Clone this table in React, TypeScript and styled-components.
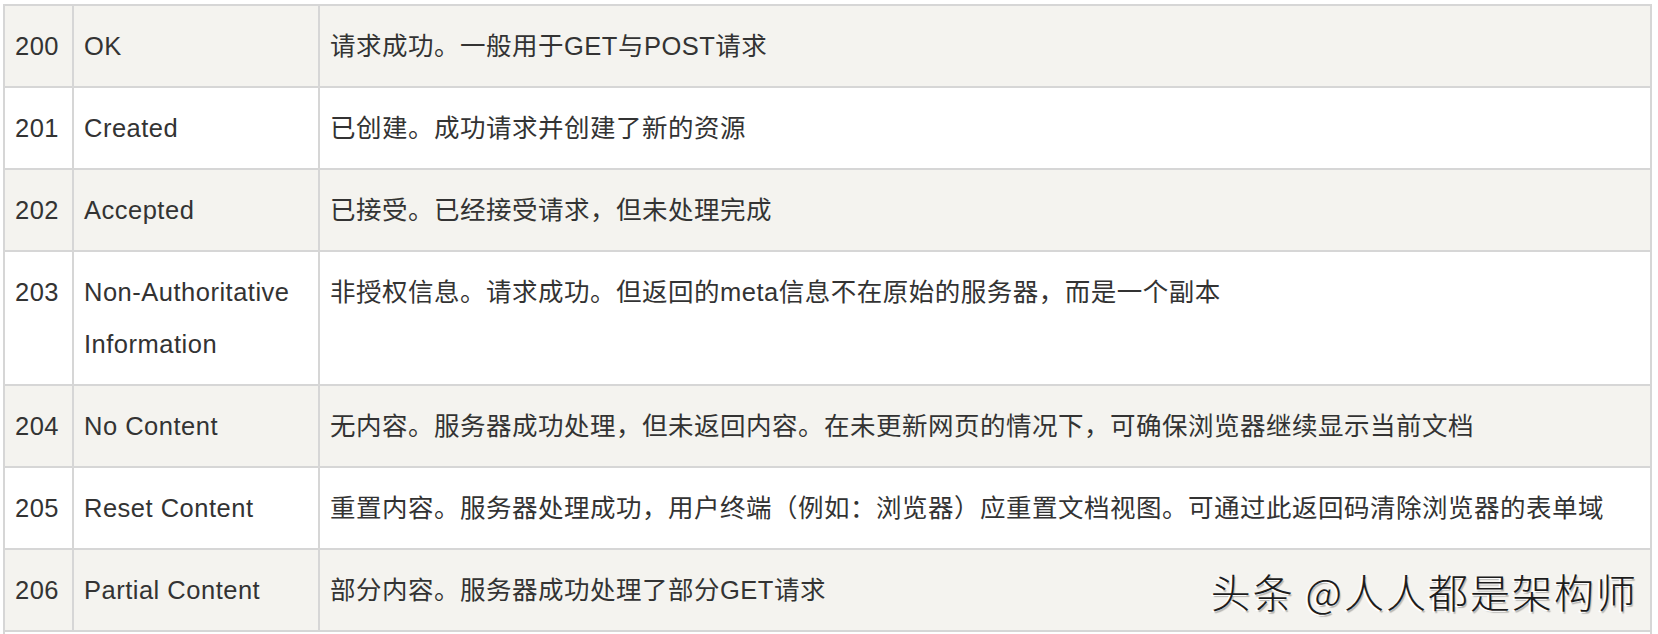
import styled, { createGlobalStyle } from "styled-components";

type StatusRow = {
  code: string;
  name: string;
  desc: string;
};

const rows: StatusRow[] = [
  { code: "200", name: "OK", desc: "请求成功。一般用于GET与POST请求" },
  { code: "201", name: "Created", desc: "已创建。成功请求并创建了新的资源" },
  { code: "202", name: "Accepted", desc: "已接受。已经接受请求，但未处理完成" },
  {
    code: "203",
    name: "Non-Authoritative Information",
    desc: "非授权信息。请求成功。但返回的meta信息不在原始的服务器，而是一个副本",
  },
  {
    code: "204",
    name: "No Content",
    desc: "无内容。服务器成功处理，但未返回内容。在未更新网页的情况下，可确保浏览器继续显示当前文档",
  },
  {
    code: "205",
    name: "Reset Content",
    desc: "重置内容。服务器处理成功，用户终端（例如：浏览器）应重置文档视图。可通过此返回码清除浏览器的表单域",
  },
  { code: "206", name: "Partial Content", desc: "部分内容。服务器成功处理了部分GET请求" },
];

const GlobalStyle = createGlobalStyle`
  html, body {
    margin: 0;
    padding: 0;
    overflow: hidden;
    background: #ffffff;
  }
`;

const Page = styled.div`
  position: relative;
  height: 634px;
  padding: 4px 0 0 3px;
  box-sizing: border-box;
  font-family: "Liberation Sans", "Noto Sans CJK SC", sans-serif;
  color: #333333;
`;

const Table = styled.table`
  width: 1649px;
  table-layout: fixed;
  border-collapse: separate;
  border-spacing: 0;
  border-top: 2px solid #d6d6d6;
  border-left: 2px solid #d6d6d6;
`;

const Row = styled.tr<{ $striped: boolean }>`
  background: ${(p) => (p.$striped ? "#f4f3ef" : "#ffffff")};
`;

const Cell = styled.td<{ $width: number }>`
  box-sizing: border-box;
  width: ${(p) => p.$width}px;
  padding: 14px 9px 14px 10px;
  border-right: 2px solid #d6d6d6;
  border-bottom: 2px solid #d6d6d6;
  font-size: 25.5px;
  line-height: 52px;
  letter-spacing: 0.5px;
  vertical-align: top;
  text-align: left;
`;

// strip of the next row, cut by the bottom edge of the frame
const Tail = styled.div`
  width: 1649px;
  height: 6px;
  box-sizing: border-box;
  border-left: 2px solid #d6d6d6;
  border-right: 2px solid #d6d6d6;
  background: #ffffff;
`;

const Watermark = styled.div`
  position: absolute;
  top: 569px;
  right: 20px;
  font-family: "Noto Sans CJK SC", sans-serif;
  font-size: 40px;
  font-weight: 300;
  line-height: 44px;
  letter-spacing: 2px;
  color: #1c1c1c;
  white-space: nowrap;
  text-shadow: -2px 1px 0 #ffffff, 1px 2px 1px rgba(0, 0, 0, 0.25);
`;

export default function App() {
  return (
    <>
      <GlobalStyle />
      <Page>
        <Table>
          <tbody>
            {rows.map((r, i) => (
              <Row key={r.code} $striped={i % 2 === 0}>
                <Cell $width={69}>{r.code}</Cell>
                <Cell $width={246}>{r.name}</Cell>
                <Cell $width={1332}>{r.desc}</Cell>
              </Row>
            ))}
          </tbody>
        </Table>
        <Tail />
        <Watermark>头条 @人人都是架构师</Watermark>
      </Page>
    </>
  );
}
